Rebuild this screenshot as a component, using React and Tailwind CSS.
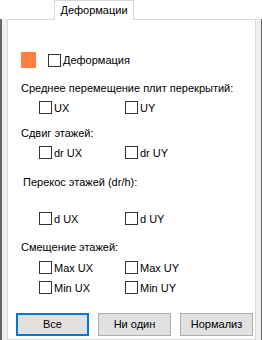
import React from 'react'

function Check({ label }) {
  return (
    <div className="flex items-center h-[13px] whitespace-nowrap">
      <span className="w-[13px] h-[13px] border border-[#333333] bg-white shrink-0" />
      <span className="ml-[2px] leading-[16px]">{label}</span>
    </div>
  )
}

function CheckRow({ left, right, className = '' }) {
  return (
    <div className={`flex pl-[31px] ${className}`}>
      <div className="w-[86px]">
        <Check label={left} />
      </div>
      <Check label={right} />
    </div>
  )
}

function Button({ children, focused }) {
  return (
    <button
      className={`w-[73px] h-[23px] bg-[#e1e1e1] text-black leading-none ${
        focused ? 'border-2 border-[#0078d7]' : 'border border-[#adadad]'
      }`}
    >
      {children}
    </button>
  )
}

export default function App() {
  return (
    <div
      className="w-[262px] h-[340px] bg-white text-[11px] text-black overflow-hidden flex flex-col whitespace-nowrap"
      style={{ fontFamily: '"Liberation Sans", Arial, sans-serif' }}
    >
      {/* tab strip */}
      <div className="h-[19px] shrink-0 relative z-10">
        <div className="ml-[54px] w-[80px] h-[20px] border-x border-t border-[#d9d9d9] bg-white flex items-center justify-center leading-none">
          Деформации
        </div>
      </div>

      {/* frame */}
      <div className="flex flex-1 min-h-0">
        <div className="w-[2px] bg-[#666666]" />
        <div className="w-[5px] bg-[#f0f0f0]" />
        <div className="flex-1 border border-[#d9d9d9] bg-white flex flex-col">
          <div className="flex items-center h-[16px] mt-[32px] pl-[13px]">
            <span className="w-[15px] h-[16px] bg-[#ff8040]" />
            <div className="ml-[12px]">
              <Check label="Деформация" />
            </div>
          </div>

          <div className="h-[16px] leading-[16px] mt-[12px] pl-[13px]">
            Среднее перемещение плит перекрытий:
          </div>
          <CheckRow left="UX" right="UY" className="mt-[5px]" />

          <div className="h-[16px] leading-[16px] mt-[11px] pl-[13px]">Сдвиг этажей:</div>
          <CheckRow left="dr UX" right="dr UY" className="mt-[5px]" />

          <div className="h-[16px] leading-[16px] mt-[15px] pl-[15px]">Перекос этажей (dr/h):</div>
          <CheckRow left="d UX" right="d UY" className="mt-[22px]" />

          <div className="h-[16px] leading-[16px] mt-[14px] pl-[13px]">Смещение этажей:</div>
          <CheckRow left="Max UX" right="Max UY" className="mt-[6px]" />
          <CheckRow left="Min UX" right="Min UY" className="mt-[7px]" />

          <div className="flex gap-[9px] mt-[19px] pl-[8px]">
            <Button focused>Все</Button>
            <Button>Ни один</Button>
            <Button>Нормализ</Button>
          </div>
        </div>
        <div className="w-[5px] bg-[#f0f0f0]" />
        <div className="w-[1px] bg-[#666666]" />
      </div>
    </div>
  )
}
